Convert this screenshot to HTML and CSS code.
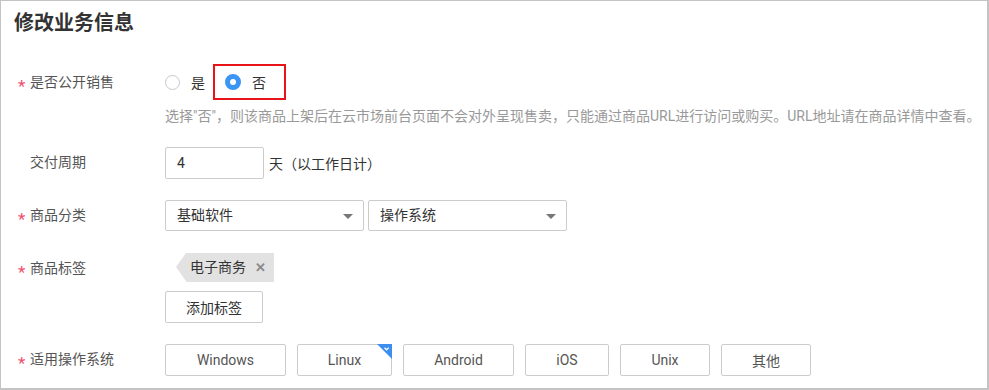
FILE: index.html
```html
<!DOCTYPE html>
<html lang="zh-CN">
<head>
    <meta charset="UTF-8">
    <title>修改业务信息</title>
    <link rel="stylesheet" href="styles.css">
</head>
<body>

<div class="panel">
    <h2 class="panel-title">修改业务信息</h2>

    <!-- 是否公开销售 -->
    <div class="form-row row-public">
        <label class="form-label required">是否公开销售</label>
        <div class="form-field">
            <span class="radio">
                <span class="radio-dot"></span>
                <span class="radio-text">是</span>
            </span>
            <span class="radio radio-checked highlight">
                <span class="radio-dot"></span>
                <span class="radio-text">否</span>
            </span>
        </div>
    </div>
    <p class="form-help">选择"否"，则该商品上架后在云市场前台页面不会对外呈现售卖，只能通过商品URL进行访问或购买。URL地址请在商品详情中查看。</p>

    <!-- 交付周期 -->
    <div class="form-row row-period">
        <label class="form-label">交付周期</label>
        <div class="form-field">
            <input class="text-input" type="text" value="4">
            <span class="unit">天（以工作日计）</span>
        </div>
    </div>

    <!-- 商品分类 -->
    <div class="form-row row-category">
        <label class="form-label required">商品分类</label>
        <div class="form-field">
            <div class="select">基础软件<span class="caret"></span></div>
            <div class="select select-second">操作系统<span class="caret"></span></div>
        </div>
    </div>

    <!-- 商品标签 -->
    <div class="form-row row-tags">
        <label class="form-label required">商品标签</label>
        <div class="form-field form-field-column">
            <span class="tag">电子商务<span class="tag-close">✕</span></span>
            <button class="btn btn-add">添加标签</button>
        </div>
    </div>

    <!-- 适用操作系统 -->
    <div class="form-row row-os">
        <label class="form-label required">适用操作系统</label>
        <div class="form-field os-list">
            <button class="btn os-btn os-windows">Windows</button>
            <button class="btn os-btn os-linux selected">Linux
                <svg class="corner-check" width="15" height="15" viewBox="0 0 15 15">
                    <path d="M0 0H15V15Z" fill="#3d8ef0"/>
                    <path d="M7.5 3.8L9.6 5.8L11.8 3.6" fill="none" stroke="#fff" stroke-width="1.3"/>
                </svg>
            </button>
            <button class="btn os-btn os-android">Android</button>
            <button class="btn os-btn os-ios">iOS</button>
            <button class="btn os-btn os-unix">Unix</button>
            <button class="btn os-btn os-other">其他</button>
        </div>
    </div>
</div>

</body>
</html>
```

FILE: styles.css
```css
/* 全局样式 */
* {
    margin: 0;
    padding: 0;
    box-sizing: border-box;
}

body {
    background: #fff;
    font-family: Roboto, "Noto Sans CJK SC", sans-serif;
    font-size: 14px;
    color: #333;
}

/* 外框 */
.panel {
    width: 989px;
    height: 390px;
    border-style: solid;
    border-color: #c4c4c4;
    border-width: 1px 2px 2px 1px;
    overflow: hidden;
}

.panel-title {
    margin: 8px 0 0 13px;
    font-size: 20px;
    line-height: 28px;
    font-weight: 700;
    color: #333;
}

/* 表单行 */
.form-row {
    display: flex;
    align-items: flex-start;
    padding-left: 17px;
}

.form-label {
    width: 147px;
    flex-shrink: 0;
    padding-left: 12px;
    position: relative;
    font-size: 14px;
    color: #555;
    line-height: 31px;
}

.form-label.required::before {
    content: "*";
    position: absolute;
    left: 0;
    top: 4px;
    color: #f0506e;
    font-size: 17px;
}

.form-field {
    display: flex;
    align-items: center;
}

.form-field-column {
    flex-direction: column;
    align-items: flex-start;
}

/* 单选 */
.row-public {
    margin-top: 27px;
}

.row-public .form-label {
    line-height: 36px;
}

.radio {
    display: flex;
    align-items: center;
    height: 36px;
}

.radio-dot {
    width: 15px;
    height: 15px;
    border: 1px solid #c8c8c8;
    border-radius: 50%;
}

.radio-text {
    margin-left: 11px;
    color: #333;
}

.radio.highlight {
    margin-left: 8px;
    width: 73px;
    border: 2px solid #e8141a;
    padding-left: 10px;
}

.radio-checked .radio-dot {
    width: 16px;
    height: 16px;
    border: 5px solid #3b95f5;
    background: #fff;
}

.radio-checked .radio-text {
    margin-left: 11px;
}

.form-help {
    margin: 6px 0 0 164px;
    font-size: 14px;
    line-height: 20px;
    color: #999;
    white-space: nowrap;
}

/* 交付周期 */
.row-period {
    margin-top: 21px;
}

.text-input {
    width: 99px;
    height: 32px;
    border: 1px solid #ccc;
    border-radius: 2px;
    padding-left: 11px;
    font-family: inherit;
    font-size: 14px;
    color: #333;
    outline: none;
}

.unit {
    margin-left: 5px;
    color: #333;
}

/* 商品分类 */
.row-category {
    margin-top: 21px;
}

.select {
    width: 199px;
    height: 31px;
    border: 1px solid #ccc;
    border-radius: 2px;
    padding-left: 11px;
    line-height: 29px;
    position: relative;
    color: #333;
}

.select-second {
    margin-left: 4px;
}

.caret {
    position: absolute;
    right: 10px;
    top: 13px;
    border-left: 5px solid transparent;
    border-right: 5px solid transparent;
    border-top: 5px solid #777;
}

/* 商品标签 */
.row-tags {
    margin-top: 22px;
}

.row-tags .form-label {
    line-height: 30px;
}

.tag {
    position: relative;
    margin-left: 21px;
    height: 29px;
    line-height: 29px;
    padding: 0 8px 0 4px;
    background: #e2e2e2;
    color: #333;
    font-size: 14px;
}

.tag::before {
    content: "";
    position: absolute;
    left: -10px;
    top: 0;
    border-top: 14.5px solid transparent;
    border-bottom: 14.5px solid transparent;
    border-right: 10px solid #e2e2e2;
}

.tag-close {
    margin-left: 9px;
    color: #8a8a8a;
    font-size: 13px;
    font-weight: 700;
}

.btn {
    height: 32px;
    border: 1px solid #ccc;
    border-radius: 2px;
    background: #fff;
    font-family: inherit;
    font-size: 14px;
    color: #333;
}

.btn-add {
    margin-top: 9px;
    width: 98px;
}

/* 操作系统 */
.row-os {
    margin-top: 21px;
}

.os-list {
    gap: 11px;
}

.os-btn {
    position: relative;
    color: #555;
}

.os-windows { width: 121px; }
.os-linux { width: 95px; }
.os-android { width: 111px; }
.os-ios { width: 84px; }
.os-unix { width: 90px; }
.os-other { width: 90px; }

.corner-check {
    position: absolute;
    top: -1px;
    right: -1px;
}
```
